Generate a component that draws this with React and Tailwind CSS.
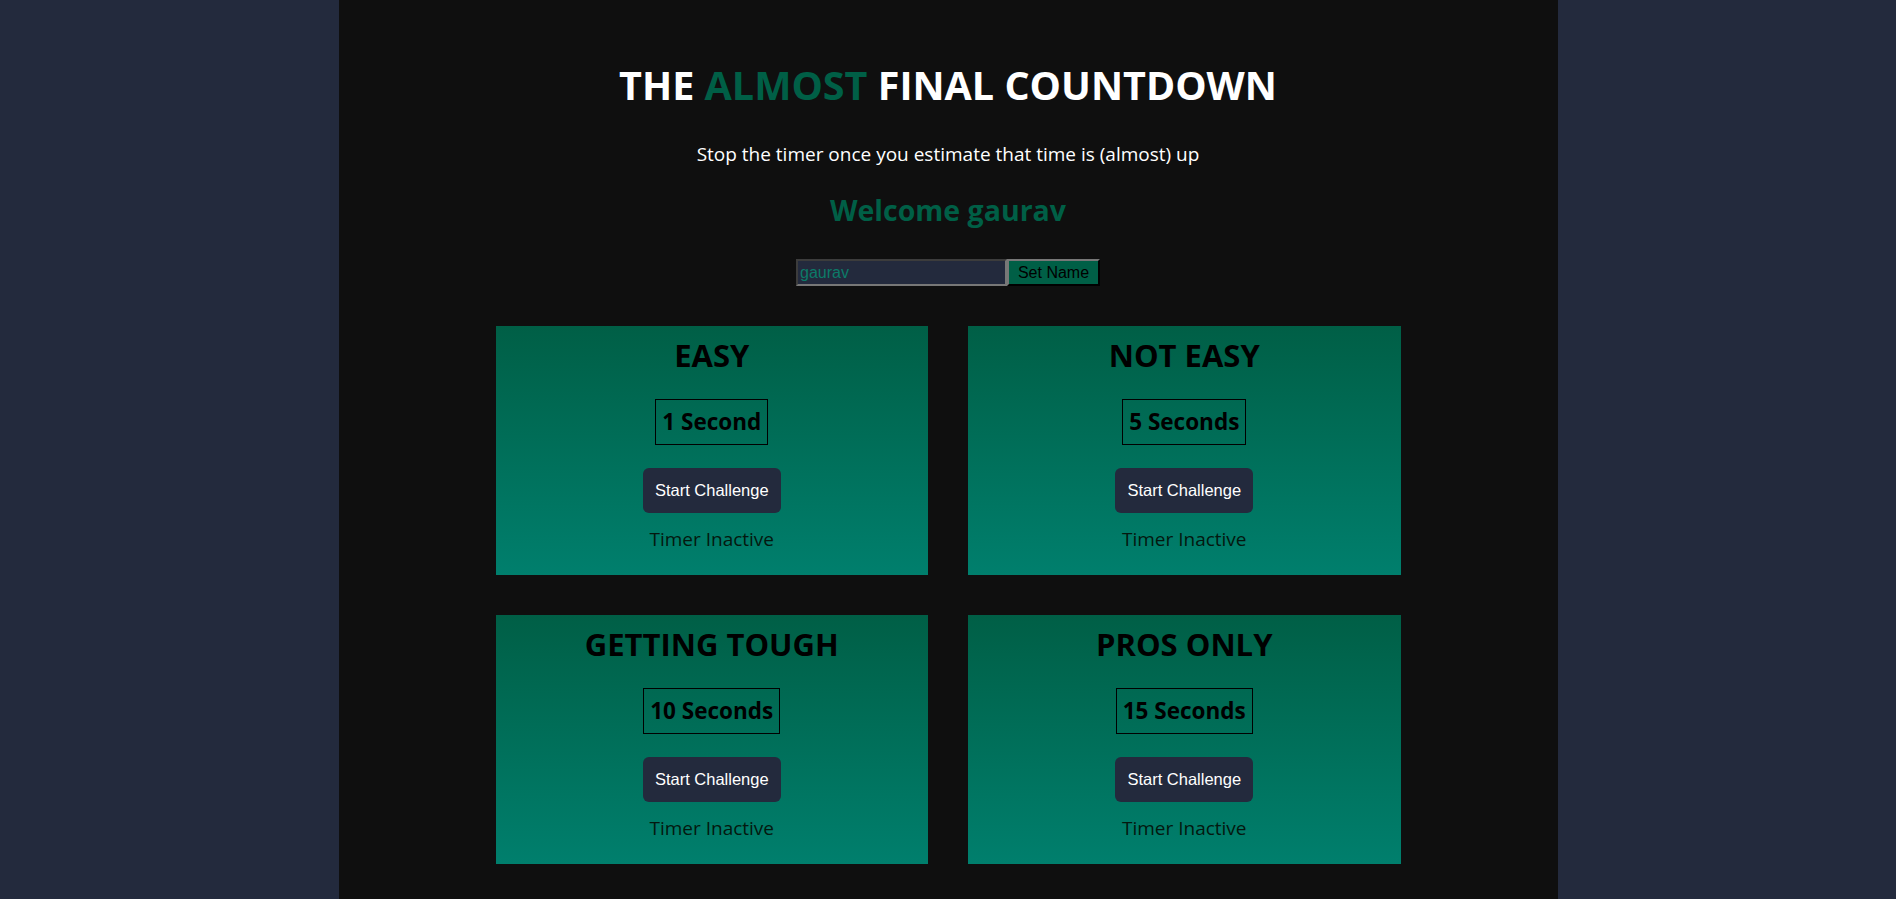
import React, { useState } from "react";

const challenges = [
  { title: "EASY", target: 1 },
  { title: "NOT EASY", target: 5 },
  { title: "GETTING TOUGH", target: 10 },
  { title: "PROS ONLY", target: 15 },
];

const headingFont = { fontFamily: '"Open Sans", "Noto Sans", sans-serif' };

const TimerChallenge = ({ title, target }) => {
  return (
    <section className="h-[249px] flex flex-col items-center pt-[9px] bg-gradient-to-b from-[#005f46] to-[#007f6d]">
      <h2 className="text-[31px] leading-[40px] font-bold text-black">{title}</h2>
      <p className="mt-[24px] border border-black px-[6px] py-[6px] text-[22.5px] leading-[32px] font-bold text-black">
        {target} Second{target > 1 ? "s" : ""}
      </p>
      <button className="mt-[23px] h-[45px] px-[12px] rounded-md bg-[#232a3d] text-white text-[16.5px] font-['Liberation_Sans',Arial,sans-serif]">
        Start Challenge
      </button>
      <p className="mt-[12px] text-[19px] leading-[28px] text-[#04180f]">Timer Inactive</p>
    </section>
  );
};

const App = () => {
  const [name, setName] = useState("gaurav");
  const [input, setInput] = useState("gaurav");

  return (
    <div className="min-h-screen bg-[#232a3d]" style={headingFont}>
      <div className="mx-auto w-[1219px] min-h-screen bg-[#0f0f0f] flex flex-col items-center pt-[60px] pb-10">
        <h1 className="text-[39.5px] leading-[50px] font-bold text-white">
          THE <span className="text-[#005f46]">ALMOST</span> FINAL COUNTDOWN
        </h1>
        <p className="mt-[30px] text-[19px] leading-[28px] text-white">
          Stop the timer once you estimate that time is (almost) up
        </p>
        <h2 className="mt-[24px] text-[28.5px] leading-[36px] font-bold text-[#005f46]">
          Welcome {name}
        </h2>

        {/* Name form */}
        <div className="mt-[31px] flex font-['Liberation_Sans',Arial,sans-serif] text-[16px]">
          <input
            value={input}
            onChange={(e) => setInput(e.target.value)}
            className="w-[211px] h-[27px] px-[2px] bg-[#232a3d] text-[#0c7b68] border-2 border-t-[#3c3c3c] border-l-[#3c3c3c] border-b-[#777] border-r-[#777] outline-none"
          />
          <button
            onClick={() => setName(input)}
            className="w-[93px] h-[27px] bg-[#005f46] text-black border-2 border-t-[#777] border-l-[#777] border-b-black border-r-black"
          >
            Set Name
          </button>
        </div>

        <div className="mt-[40px] w-[905px] grid grid-cols-2 gap-10">
          {challenges.map((c) => (
            <TimerChallenge key={c.title} title={c.title} target={c.target} />
          ))}
        </div>
      </div>
    </div>
  );
};

export default App;
